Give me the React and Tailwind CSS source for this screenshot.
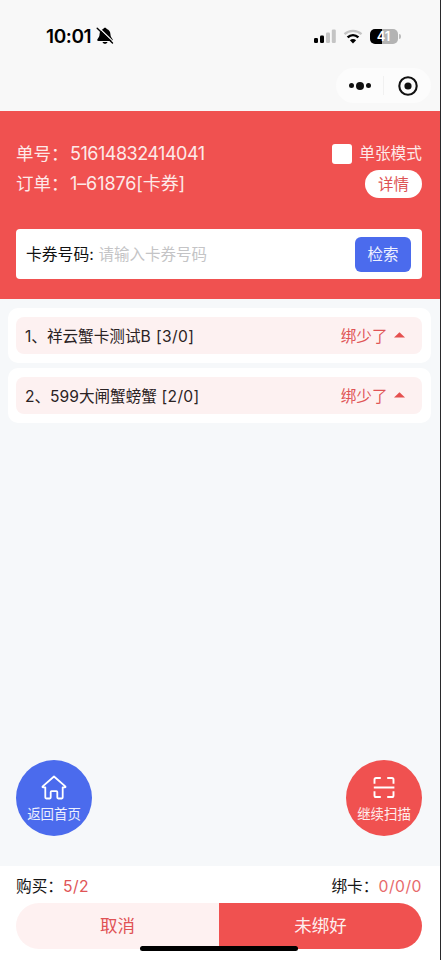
const SANS = "font-['Inter','Noto_Sans_CJK_SC',sans-serif]";

function StatusBar() {
  return (
    <div className="flex h-[72px] items-center justify-between pl-[46px] pr-[39px]">
      <div className="flex items-center">
        <span className="w-[47px] whitespace-nowrap pt-px text-[19px] font-semibold leading-6 tracking-[-0.4px] text-black">10:01</span>
        <svg className="ml-[3px]" width="18" height="18" viewBox="0 0 18 18">
          <path d="M9 .7c-.9 0-1.600.6-1.700 1.400C4.900 2.900 3.700 4.700 3.600 7.100c-.1 2.400-.8 3.500-2 4.800-.8.900-.4 2 .7 2h13.400c1.100 0 1.500-1.100.7-2-1.200-1.300-1.900-2.400-2-4.800-.1-2.400-1.300-4.200-3.700-5C10.600 1.300 9.900.7 9 .7zM6.500 14.900c.3 1.100 1.300 1.800 2.500 1.800s2.200-.7 2.500-1.800z" fill="#000" />
          <path d="M2.300.2L17.500 14.900" stroke="#f8f8f8" strokeWidth="1.300" />
          <path d="M1.200 1.200L16.500 16" stroke="#000" strokeWidth="1.400" strokeLinecap="round" />
        </svg>
      </div>
      <div className="flex items-center">
        <svg width="24" height="16" viewBox="0 0 24 16">
          <rect x="1" y="10" width="4" height="5" rx="1.200" fill="#000" />
          <rect x="7" y="7.500" width="4" height="7.500" rx="1.200" fill="#000" />
          <rect x="13" y="4.500" width="4" height="10.500" rx="1.200" fill="#c4c4c4" />
          <rect x="18.800" y="1.500" width="4" height="13.500" rx="1.200" fill="#c4c4c4" />
        </svg>
        <svg className="ml-[6px]" width="20" height="15" viewBox="0 0 20 15" fill="none">
          <path d="M1.500 5.200C6.300.8 13.700.8 18.500 5.200" stroke="#c4c4c4" strokeWidth="2.300" />
          <path d="M4.600 8.400c3.200-2.900 7.600-2.900 10.800 0" stroke="#000" strokeWidth="2.500" />
          <path d="M6.900 11.200c1.800-1.600 4.400-1.600 6.200 0L10 14.500z" fill="#000" />
        </svg>
        <div className="ml-[7px] flex h-[15px] w-[28px] items-center justify-center rounded-[5px] bg-[linear-gradient(90deg,#000_42%,#b3b3b3_42%)] text-[13px] font-semibold leading-none tracking-[-0.2px] text-white">41</div>
        <div className="ml-[1px] h-[5px] w-[2px] rounded-r-full bg-[#bcbcbc]" />
      </div>
    </div>
  );
}

function Capsule() {
  return (
    <div className="flex h-[39px] justify-end pr-[8.500px]">
      <div className="-mt-[4px] flex h-[35px] w-[95px] items-center rounded-full bg-[#fcfcfc]">
        <div className="flex h-[19px] w-[48px] items-center justify-center gap-[2px] border-r border-[#f1f1f1]">
          <i className="size-[5px] rounded-full bg-[#111]" />
          <i className="size-[8px] rounded-full bg-[#111]" />
          <i className="size-[5px] rounded-full bg-[#111]" />
        </div>
        <svg className="ml-[14px]" width="20" height="20" viewBox="0 0 20 20">
          <circle cx="10" cy="10" r="8.700" fill="none" stroke="#111" strokeWidth="2.100" />
          <circle cx="10" cy="10" r="3.600" fill="#111" />
        </svg>
      </div>
    </div>
  );
}

function OrderPanel() {
  return (
    <section className="h-[188px] bg-[#f05150] pl-4 pr-[17.500px] pt-[27px] text-[#fde9e8]">
      <div className="flex h-[31px] items-center justify-between">
        <div className="flex whitespace-nowrap text-[18px] leading-[31px]">
          <span className="w-[54px] text-[17.500px]">单号：</span>
          <span className="tracking-[-0.5px]">51614832414041</span>
        </div>
        <label className="flex items-center text-[15.700px] leading-[31px]">
          <span className="mr-[7px] size-5 rounded-[3px] bg-white" />
          <span>单张模式</span>
        </label>
      </div>
      <div className="flex h-[30px] items-center justify-between">
        <div className="flex whitespace-nowrap text-[18px] leading-[30px]">
          <span className="w-[54px] text-[17.500px]">订单：</span>
          <span className="tracking-[-0.100px]">1–61876[卡券]</span>
        </div>
        <button className="h-[28px] w-[57px] rounded-full bg-white pt-px text-[15.500px] leading-[27px] text-[#dd5354]">详情</button>
      </div>
      <div className="mt-[30px] flex h-[50px] items-center rounded-[4px] bg-white pl-[10px] pr-[11px]">
        <span className="w-[72.500px] whitespace-nowrap pt-px text-[15.800px] text-[#111]">卡券号码:</span>
        <span className="flex-1 pt-px text-[15.500px] text-[#c4c4c6]">请输入卡券号码</span>
        <button className="h-[35px] w-14 rounded-[6px] bg-[#4b6bed] pt-px text-[15.500px] text-[#eef1ff]">检索</button>
      </div>
    </section>
  );
}

function Item({ children }) {
  return (
    <div className="h-[55px] rounded-[10px] bg-white py-[9px] pl-2 pr-[9px]">
      <div className="flex h-[37px] items-center justify-between rounded-[8px] bg-[#fdf1f1] pl-[9px] pr-[17px] pt-[2px] text-[15.600px] text-[#2b2324]">
        <span className="whitespace-nowrap">{children}</span>
        <span className="flex items-center text-[#e05456]">
          绑少了
          <svg className="mb-[2px] ml-[6px]" width="11" height="6" viewBox="0 0 11 6"><path d="M5.500.2L11 5.600H0z" fill="#e5504f" /></svg>
        </span>
      </div>
    </div>
  );
}

function RoundButton({ tone, icon, label }) {
  return (
    <button className={`flex size-[76px] flex-col items-center rounded-full pt-[14px] text-[13.400px] leading-5 text-white/90 ${tone}`}>
      {icon}
      <span className="mt-[2px] whitespace-nowrap">{label}</span>
    </button>
  );
}

const HomeIcon = (
  <svg width="28" height="28" viewBox="0 0 28 28" fill="none" stroke="#fff" strokeWidth="1.800" strokeLinejoin="round" strokeLinecap="round">
    <path d="M14 2.500L2.700 12.400c-.4.500-.2.900.4.900h2.200v10.300c0 .6.300.9.900.9h3.600c.6 0 .9-.3.900-.9v-5.600c0-.6.300-.9.900-.9h4.800c.6 0 .9.300.9.900v5.600c0 .6.300.9.900.9h3.600c.6 0 .9-.3.900-.9V13.300h2.200c.6 0 .8-.4.400-.9z" />
  </svg>
);

const ScanIcon = (
  <svg width="28" height="28" viewBox="0 0 28 28" fill="none" stroke="#fff" strokeWidth="1.900" strokeLinejoin="round">
    <path d="M4.500 9.800V5.600q0-1.600 1.600-1.600h4.700M17.200 4h4.700q1.600 0 1.600 1.600v4.200M4.500 17.200v4.200q0 1.600 1.600 1.600h4.700M17.200 23h4.700q1.600 0 1.600-1.600v-4.200M3.800 13.500h20.600" />
  </svg>
);

export default function App() {
  return (
    <div className={`flex h-[960px] w-[441px] overflow-hidden bg-[#29292b] ${SANS}`}>
      <div className="relative flex h-full w-[439.500px] flex-col bg-[#f6f8fa]">
        <header className="h-[111px] bg-[#f8f8f8]">
          <StatusBar />
          <Capsule />
        </header>
        <OrderPanel />
        <main className="flex flex-1 flex-col gap-[5px] pl-2 pr-[9px] pt-[9px]">
          <Item>1、祥云蟹卡测试<span className="tracking-[0.400px]">B [3/0]</span></Item>
          <Item>2、599大闸蟹螃蟹<span className="tracking-[0.300px]"> [2/0]</span></Item>
          <div className="mb-[30px] mt-auto flex justify-between px-2 pr-[8.500px]">
            <RoundButton tone="bg-[#4b6bed]" icon={HomeIcon} label="返回首页" />
            <RoundButton tone="bg-[#f05150]" icon={ScanIcon} label="继续扫描" />
          </div>
        </main>
        <footer className="h-[94px] bg-white pl-4 pr-[17.500px]">
          <div className="flex h-[37px] items-center justify-between whitespace-nowrap pt-[5px] text-[15.700px] text-[#161616]">
            <span>购买：<span className="tracking-[0.400px] text-[#e05557]">5/2</span></span>
            <span>绑卡：<span className="tracking-[0.500px] text-[#e76a6b]">0/0/0</span></span>
          </div>
          <div className="flex h-[46px] overflow-hidden rounded-full text-[17.500px]">
            <button className="flex-1 bg-[#fef1f1] pt-px text-[#e05254]">取消</button>
            <button className="flex-1 bg-[#f05150] pt-px text-[#fdeeee]">未绑好</button>
          </div>
        </footer>
        <div className="absolute bottom-[9px] left-[140px] h-[5.500px] w-[158px] rounded-full bg-black" />
      </div>
    </div>
  );
}
